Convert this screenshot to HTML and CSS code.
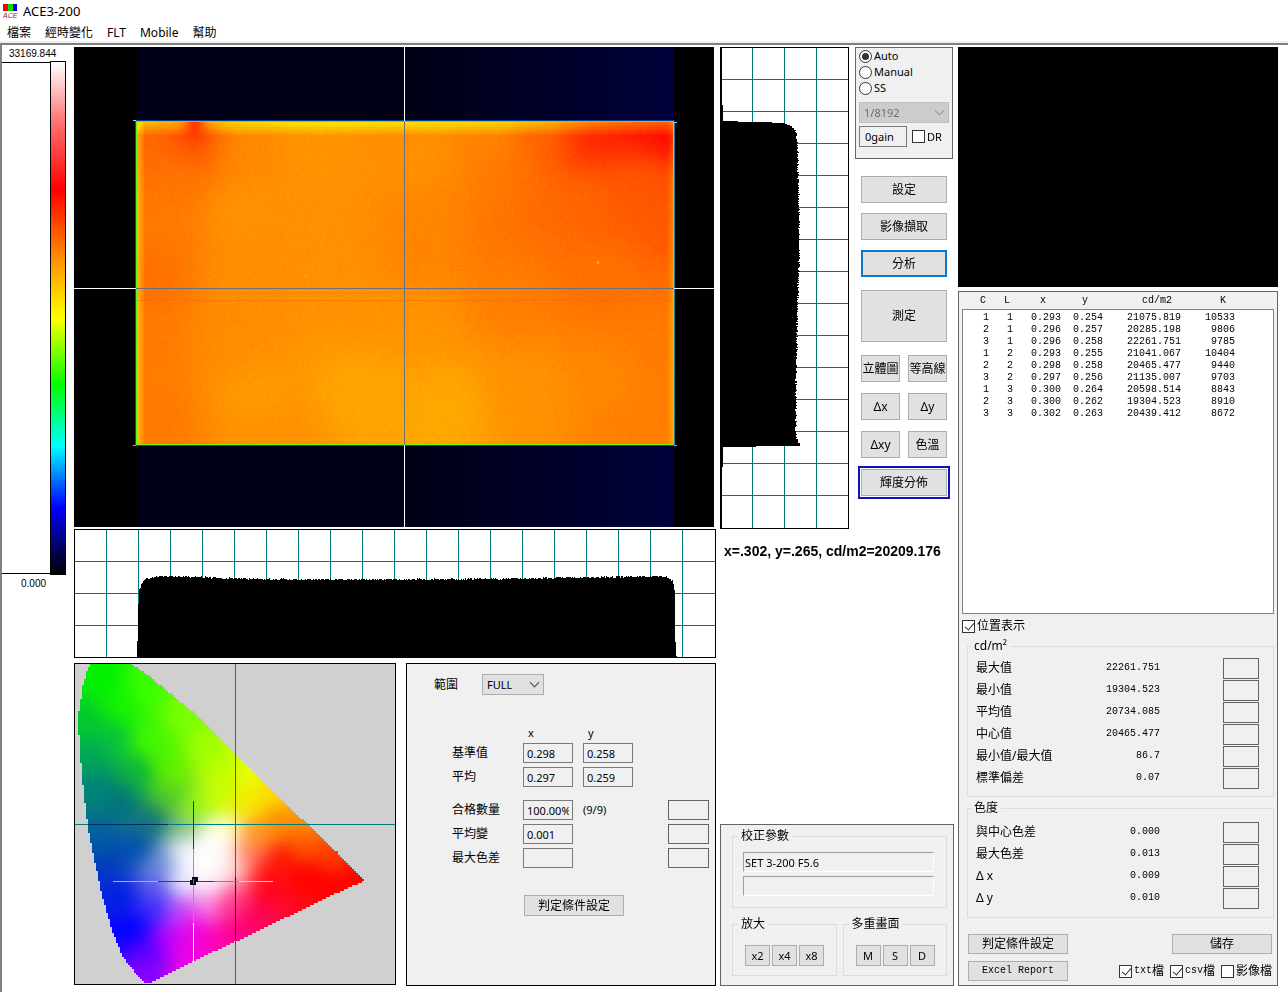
FILE: index.html
```html
<!DOCTYPE html>
<html lang="zh-Hant">
<head>
  <meta charset="utf-8">
  <title>ACE3-200</title>
  <link rel="stylesheet" href="styles.css">
</head>
<body>
  <header>
    <div class="titlebar">
      <svg class="logo" width="15" height="15" viewBox="0 0 15 15">
        <rect x="0" y="0" width="5" height="7" fill="#ff0000"/>
        <rect x="5" y="0" width="5" height="7" fill="#00e000"/>
        <rect x="10" y="0" width="4" height="7" fill="#0000d8"/>
        <text x="0" y="14" font-family="Liberation Sans" font-size="7" font-style="italic" fill="#a01828">ACE</text>
      </svg>
      <span>ACE3-200</span>
    </div>
    <nav class="menu">
      <a href="#">檔案</a>
      <a href="#">經時變化</a>
      <a href="#">FLT</a>
      <a href="#">Mobile</a>
      <a href="#">幫助</a>
    </nav>
  </header>

  <main class="workspace">
    <div class="scale">
      <div class="scale-label">33169.844</div>
      <div class="scale-body">
        <div class="scale-range"></div>
        <div class="scale-bar"></div>
      </div>
      <div class="scale-label low">0.000</div>
    </div>

    <div class="images">
      <div class="heatmap"><canvas id="heatmap" width="640" height="480"></canvas></div>
      <canvas id="profileX" width="642" height="129"></canvas>
      <div class="images-bottom">
        <canvas id="gamut" width="322" height="322"></canvas>
        <section class="judge">
          <div class="range">
            <label for="range">範圍</label>
            <span class="select"><select id="range"><option>FULL</option></select></span>
          </div>
          <div class="judge-grid">
            <span></span><span class="head">x</span><span class="head">y</span><span></span><span></span>
            <label for="baseX">基準值</label>
            <input type="text" id="baseX" value="0.298">
            <input type="text" aria-label="基準值 y" value="0.258">
            <span></span><span></span>
            <label for="avgX">平均</label>
            <input type="text" id="avgX" value="0.297">
            <input type="text" aria-label="平均 y" value="0.259">
            <span></span><span></span>
          </div>
          <div class="judge-grid results">
            <label for="passed">合格數量</label>
            <input type="text" id="passed" value="100.00%">
            <span class="count">(9/9)</span><span></span><span class="mark"></span>
            <label for="avgDiff">平均變</label>
            <input type="text" id="avgDiff" value="0.001">
            <span></span><span></span><span class="mark"></span>
            <label for="maxDiff">最大色差</label>
            <input type="text" id="maxDiff" value="">
            <span></span><span></span><span class="mark"></span>
          </div>
          <button class="judge-button">判定條件設定</button>
        </section>
      </div>
    </div>

    <div class="middle">
      <div class="middle-top">
        <canvas id="profileY" width="129" height="482"></canvas>
        <div class="controls">
          <div class="exposure">
            <label class="option"><input type="radio" name="mode" checked>Auto</label>
            <label class="option"><input type="radio" name="mode">Manual</label>
            <label class="option"><input type="radio" name="mode">SS</label>
            <span class="select"><select aria-label="shutter" disabled><option>1/8192</option></select></span>
            <div class="gain">
              <input type="text" aria-label="gain" value="0gain">
              <label><input type="checkbox">DR</label>
            </div>
          </div>
          <div class="actions">
            <button>設定</button>
            <button>影像擷取</button>
            <button class="active">分析</button>
          </div>
          <button class="measure">測定</button>
          <div class="views">
            <button>立體圖</button>
            <button>等高線</button>
            <button>Δx</button>
            <button>Δy</button>
            <button>Δxy</button>
            <button>色溫</button>
            <button class="selected">輝度分佈</button>
          </div>
        </div>
      </div>
      <p class="readout">x=.302, y=.265, cd/m2=20209.176</p>
      <section class="panel correction">
        <fieldset>
          <legend>校正參數</legend>
          <input type="text" class="sunken" aria-label="校正參數 1" value="SET 3-200 F5.6">
          <input type="text" class="sunken" aria-label="校正參數 2" value="">
        </fieldset>
        <div class="pair">
          <fieldset>
            <legend>放大</legend>
            <div class="keys">
              <button>x2</button>
              <button>x4</button>
              <button>x8</button>
            </div>
          </fieldset>
          <fieldset>
            <legend>多重畫面</legend>
            <div class="keys">
              <button>M</button>
              <button>S</button>
              <button>D</button>
            </div>
          </fieldset>
        </div>
      </section>
    </div>

    <div class="right">
      <div class="camera"></div>
      <section class="panel data">
        <table>
          <thead>
            <tr><th>C</th><th>L</th><th>x</th><th>y</th><th>cd/m2</th><th>K</th></tr>
          </thead>
          <tbody>
            <tr><td>1</td><td>1</td><td>0.293</td><td>0.254</td><td>21075.819</td><td>10533</td></tr>
            <tr><td>2</td><td>1</td><td>0.296</td><td>0.257</td><td>20285.198</td><td>9806</td></tr>
            <tr><td>3</td><td>1</td><td>0.296</td><td>0.258</td><td>22261.751</td><td>9785</td></tr>
            <tr><td>1</td><td>2</td><td>0.293</td><td>0.255</td><td>21041.067</td><td>10404</td></tr>
            <tr><td>2</td><td>2</td><td>0.298</td><td>0.258</td><td>20465.477</td><td>9440</td></tr>
            <tr><td>3</td><td>2</td><td>0.297</td><td>0.256</td><td>21135.007</td><td>9703</td></tr>
            <tr><td>1</td><td>3</td><td>0.300</td><td>0.264</td><td>20598.514</td><td>8843</td></tr>
            <tr><td>2</td><td>3</td><td>0.300</td><td>0.262</td><td>19304.523</td><td>8910</td></tr>
            <tr><td>3</td><td>3</td><td>0.302</td><td>0.263</td><td>20439.412</td><td>8672</td></tr>
          </tbody>
        </table>
        <label class="position"><input type="checkbox" checked>位置表示</label>
        <fieldset class="stats">
          <legend>cd/m²</legend>
          <div class="stat"><span>最大值</span><output>22261.751</output><span class="mark"></span></div>
          <div class="stat"><span>最小值</span><output>19304.523</output><span class="mark"></span></div>
          <div class="stat"><span>平均值</span><output>20734.085</output><span class="mark"></span></div>
          <div class="stat"><span>中心值</span><output>20465.477</output><span class="mark"></span></div>
          <div class="stat"><span>最小值/最大值</span><output>86.7</output><span class="mark"></span></div>
          <div class="stat"><span>標準偏差</span><output>0.07</output><span class="mark"></span></div>
        </fieldset>
        <fieldset class="stats chroma">
          <legend>色度</legend>
          <div class="stat"><span>與中心色差</span><output>0.000</output><span class="mark"></span></div>
          <div class="stat"><span>最大色差</span><output>0.013</output><span class="mark"></span></div>
          <div class="stat"><span>Δ x</span><output>0.009</output><span class="mark"></span></div>
          <div class="stat"><span>Δ y</span><output>0.010</output><span class="mark"></span></div>
        </fieldset>
        <div class="footer">
          <button>判定條件設定</button>
          <button>儲存</button>
        </div>
        <div class="footer">
          <button class="mono">Excel Report</button>
          <div class="exports">
            <label><input type="checkbox" checked><span class="mono">txt</span>檔</label>
            <label><input type="checkbox" checked><span class="mono">csv</span>檔</label>
            <label><input type="checkbox">影像檔</label>
          </div>
        </div>
      </section>
    </div>
  </main>

  <script src="script.js"></script>
</body>
</html>
```

FILE: styles.css
```css
* {
  box-sizing: border-box;
}

body {
  margin: 0;
  background-color: #fff;
  color: #000;
  font-family: "Noto Sans", "Noto Sans CJK TC", sans-serif;
  font-size: 12px;
  line-height: 16px;
}

button, input, select {
  margin: 0;
  font-family: inherit;
  font-size: 12px;
  color: #000;
}

canvas {
  display: block;
}

.mono {
  font-family: "Liberation Mono", "Noto Sans CJK TC", monospace;
  font-size: 10px;
}

/* title and menu */

.titlebar {
  display: flex;
  align-items: center;
  gap: 5px;
  height: 22px;
  padding-left: 3px;
  font-size: 13px;
}

.menu {
  display: flex;
  gap: 14px;
  height: 21px;
  padding-left: 7px;
  line-height: 21px;
  border-bottom: 2px solid #f0f0f0;
}

.menu a {
  color: #000;
  text-decoration: none;
}

.workspace {
  display: grid;
  grid-template-columns: 68px minmax(0, 1fr) 234px 320px;
  gap: 4px;
  padding: 2px 10px 6px 0;
  border-top: 2px solid #808080;
  border-left: 2px solid #808080;
}

/* colour scale */

.scale-label {
  height: 14px;
  padding-left: 7px;
  font-family: "Liberation Sans", sans-serif;
  font-size: 10px;
  line-height: 14px;
}

.scale-label.low {
  padding-left: 19px;
  margin-top: 2px;
}

.scale-body {
  display: flex;
  height: 514px;
}

.scale-range {
  width: 48px;
  margin: 1px 0;
  border-top: 1px solid #000;
  border-bottom: 1px solid #000;
}

.scale-bar {
  width: 16px;
  border: 1px solid #000;
  background: linear-gradient(#fff, #ff7070 12%, #f00 25%, #ff8000 37%, #ff0 50%, #0f0 63%, #0ff 75%, #00f 87%, #000);
}

/* images */

.heatmap {
  padding-right: 2px;
}

#heatmap {
  width: 100%;
  height: 480px;
}

#profileX {
  width: 100%;
  height: 129px;
  margin: 2px 0 5px;
}

.images-bottom {
  display: flex;
  align-items: flex-start;
  gap: 10px;
}

.judge {
  flex: 1;
  padding: 10px 6px 69px 27px;
  border: 1px solid #000;
  background-color: #f0f0f0;
}

.range {
  display: flex;
  align-items: center;
  gap: 24px;
  margin-bottom: 32px;
}

.range .select {
  width: 62px;
}

.judge-grid {
  display: grid;
  grid-template-columns: 61px 50px 50px 1fr 41px;
  gap: 4px 10px;
  align-items: center;
  padding-left: 18px;
}

.judge-grid.results {
  margin-top: 13px;
}

.judge-grid label {
  white-space: nowrap;
}

.judge-grid input {
  width: 50px;
  height: 20px;
  padding: 0 3px;
  border: 1px solid #7a7a7a;
  background-color: #f0f0f0;
  font-size: 11px;
}

.head {
  padding-left: 5px;
  font-size: 11px;
  line-height: 12px;
}

.count {
  font-size: 11px;
}

.mark {
  height: 20px;
  border: 1px solid #646464;
}

.judge-button {
  display: block;
  width: 100px;
  height: 21px;
  margin: 27px 0 0 90px;
}

/* buttons and form controls */

button {
  padding: 0;
  border: 1px solid #adadad;
  border-radius: 0;
  background-color: #e1e1e1;
  line-height: 16px;
  white-space: nowrap;
}

button.active {
  border: 2px solid #1078c8;
}

button.selected {
  outline: 2px solid #1010c0;
  outline-offset: 1px;
}

.select {
  position: relative;
  display: block;
}

.select select {
  display: block;
  width: 100%;
  height: 21px;
  padding: 0 4px;
  border: 1px solid #adadad;
  border-radius: 0;
  background-color: #e1e1e1;
  font-size: 11px;
  appearance: none;
}

.select select:disabled {
  border-color: #bfbfbf;
  background-color: #ccc;
  color: #6d6d6d;
  opacity: 1;
}

.select::after {
  content: "";
  position: absolute;
  top: 5px;
  right: 6px;
  width: 6px;
  height: 6px;
  border-right: 1px solid #444;
  border-bottom: 1px solid #444;
  transform: rotate(45deg);
}

.exposure .select::after {
  border-color: #999;
}

input[type="checkbox"],
input[type="radio"] {
  position: relative;
  flex: none;
  width: 13px;
  height: 13px;
  border: 1px solid #333;
  background-color: #fff;
  appearance: none;
}

input[type="radio"] {
  border-radius: 50%;
}

input[type="radio"]:checked::after {
  content: "";
  position: absolute;
  top: 2px;
  left: 2px;
  width: 7px;
  height: 7px;
  border-radius: 50%;
  background-color: #333;
}

input[type="checkbox"]:checked::after {
  content: "";
  position: absolute;
  top: 0;
  left: 4px;
  width: 4px;
  height: 8px;
  border-right: 1px solid #333;
  border-bottom: 1px solid #333;
  transform: rotate(40deg);
}

/* middle column */

.middle {
  display: flex;
  flex-direction: column;
}

.middle-top {
  display: flex;
  gap: 6px;
}

.controls {
  display: flex;
  flex-direction: column;
  gap: 13px;
  width: 98px;
}

.exposure {
  height: 112px;
  padding: 0 3px;
  border: 1px solid #646464;
  background-color: #f0f0f0;
  font-size: 11px;
}

.option {
  display: flex;
  align-items: center;
  gap: 2px;
  height: 16px;
}

.exposure .select {
  margin: 6px 0 3px;
}

.gain {
  display: flex;
  gap: 5px;
}

.gain label {
  display: flex;
  align-items: center;
  gap: 2px;
}

.gain input[type="text"] {
  width: 48px;
  height: 21px;
  padding: 0 5px;
  border: 1px solid #7a7a7a;
  background-color: #f0f0f0;
  font-size: 11px;
}

.actions {
  display: flex;
  flex-direction: column;
  gap: 10px;
  margin: 4px 6px 0;
}

.actions button,
.views button {
  height: 27px;
}

.measure {
  height: 52px;
  margin: 0 6px;
}

.views {
  display: grid;
  grid-template-columns: 1fr 1fr;
  gap: 11px 8px;
  margin: 0 6px;
}

.views .selected {
  grid-column: span 2;
}

.readout {
  margin: 12px 0 0;
  padding-left: 4px;
  font-family: "Liberation Sans", sans-serif;
  font-size: 14px;
  font-weight: bold;
  line-height: 20px;
  white-space: nowrap;
}

.panel {
  border: 1px solid #646464;
  background-color: #f0f0f0;
}

fieldset {
  min-width: 0;
  margin: 0;
  border: 1px solid #dcdcdc;
}

legend {
  margin-left: -5px;
  padding: 0 3px;
  line-height: 16px;
}

.correction {
  margin-top: auto;
  padding: 3px 6px 9px 11px;
}

.correction fieldset {
  padding: 8px 12px 11px 10px;
}

.sunken {
  display: block;
  width: 100%;
  height: 20px;
  padding: 0 1px;
  border: 1px solid;
  border-color: #a0a0a0 #fff #fff #a0a0a0;
  background-color: #f0f0f0;
  font-size: 11px;
}

.sunken + .sunken {
  margin-top: 4px;
}

.pair {
  display: flex;
  gap: 6px;
  margin-top: 8px;
}

.pair fieldset {
  flex: 1;
  padding: 13px 10px 9px;
}

.keys {
  display: flex;
  gap: 2px;
  padding-left: 2px;
}

.keys button {
  width: 25px;
  height: 21px;
  font-size: 11px;
}

/* right column */

.right {
  display: flex;
  flex-direction: column;
  gap: 4px;
}

.camera {
  height: 240px;
  background-color: #000;
}

.data {
  flex: 1;
  display: flex;
  flex-direction: column;
  padding: 0 3px 4px;
}

table {
  flex: 1;
  display: flex;
  flex-direction: column;
  font-family: "Liberation Mono", monospace;
  font-size: 10px;
  line-height: 12px;
}

thead {
  display: block;
  height: 17px;
  padding: 3px 1px 0;
}

tbody {
  flex: 1;
  display: block;
  padding-top: 2px;
  border: 1px solid #828282;
  background-color: #fff;
}

tr {
  display: grid;
  grid-template-columns: 26px 24px 48px 42px 78px 54px;
}

th, td {
  padding: 0;
  font-weight: normal;
  text-align: right;
}

th {
  padding-right: 3px;
}

th:nth-child(3), th:nth-child(4) {
  padding-right: 15px;
}

th:nth-child(5), th:nth-child(6) {
  padding-right: 9px;
}

.position {
  display: flex;
  align-items: center;
  gap: 2px;
  height: 16px;
  margin: 4px 0;
}

.stats {
  margin-left: 5px;
  padding: 3px 14px 7px 8px;
}

.chroma {
  margin-top: 3px;
  padding: 5px 14px 8px 8px;
}

.stat {
  display: flex;
  align-items: center;
  height: 22px;
}

.stat span:first-child {
  flex: 1;
}

.stat output {
  margin-right: 63px;
  font-family: "Liberation Mono", monospace;
  font-size: 10px;
}

.stat .mark {
  width: 36px;
  height: 21px;
}

.footer {
  display: flex;
  align-items: center;
  justify-content: space-between;
  height: 20px;
  margin: 7px 2px 0 6px;
}

.chroma + .footer {
  margin-top: 16px;
}

.footer button {
  width: 100px;
  height: 20px;
}

.exports {
  display: flex;
  gap: 6px;
}

.exports label {
  display: flex;
  align-items: center;
}

.exports input {
  margin-right: 2px;
}
```

FILE: script.js
```js
// small repeatable random generator so the plots look the same every time
var seed = 7;
function rand() {
  seed = (seed * 16807) % 2147483647;
  return seed / 2147483647;
}

// colour at x, y weighted by the distance to points: [x, y, r, g, b]
function blend(points, x, y, size) {
  var r = 0, g = 0, b = 0, total = 0;
  for (var i = 0; i < points.length; i++) {
    var p = points[i];
    var dx = x - p[0], dy = y - p[1];
    var d = dx * dx + dy * dy + size * size;
    var w = 1 / (d * d);
    r += p[2] * w;
    g += p[3] * w;
    b += p[4] * w;
    total += w;
  }
  return [r / total, g / total, b / total];
}

// blended colours on a coarse grid, averaged over the cells around each one
function smoothField(points, w, h, step, size, radius) {
  var cols = Math.ceil(w / step), rows = Math.ceil(h / step);
  var field = [];
  for (var j = 0; j < rows; j++) {
    for (var i = 0; i < cols; i++) field.push(blend(points, i * step, j * step, size));
  }

  function pass(src, di, dj) {
    return src.map(function (c, n) {
      var i = n % cols, j = Math.floor(n / cols);
      var sum = [0, 0, 0], count = 0;
      for (var k = -radius; k <= radius; k++) {
        var ii = i + k * di, jj = j + k * dj;
        if (ii < 0 || jj < 0 || ii >= cols || jj >= rows) continue;
        var s = src[jj * cols + ii];
        sum[0] += s[0];
        sum[1] += s[1];
        sum[2] += s[2];
        count++;
      }
      return [sum[0] / count, sum[1] / count, sum[2] / count];
    });
  }

  for (var n = 0; n < 2; n++) field = pass(pass(field, 1, 0), 0, 1);
  return function (x, y) {
    return field[Math.floor(y / step) * cols + Math.floor(x / step)];
  };
}

function line(ctx, color, x, y, w, h) {
  ctx.fillStyle = color;
  ctx.fillRect(x, y, w, h);
}

function drawHeatmap() {
  var ctx = document.getElementById('heatmap').getContext('2d');
  // x, y, green level
  var levels = [
    [79, 93, 104], [120, 85, 66], [100, 126, 116], [79, 226, 112], [79, 176, 122],
    [79, 376, 122], [79, 293, 124], [162, 93, 138], [162, 160, 146], [162, 226, 142],
    [162, 293, 140], [183, 343, 154], [203, 386, 144], [245, 90, 148], [245, 126, 146], [245, 193, 144],
    [286, 260, 146], [286, 343, 166], [348, 90, 140], [348, 110, 146], [369, 160, 132], [348, 210, 132],
    [348, 276, 148], [369, 360, 168], [411, 90, 132], [431, 126, 120], [431, 176, 116],
    [431, 243, 126], [452, 343, 146], [473, 93, 98], [514, 94, 40], [556, 86, 22], [593, 90, 4],
    [514, 143, 100], [560, 125, 88], [576, 170, 90], [535, 226, 112], [576, 293, 122], [535, 326, 134],
    [576, 376, 126], [470, 160, 106], [590, 135, 84]
  ];
  var points = levels.map(function (p) { return [p[0], p[1], 255, p[2], 0]; });
  var field = smoothField(points, 640, 480, 2, 16, 6);

  line(ctx, '#000', 0, 0, 640, 480);
  var navy = ctx.createLinearGradient(63, 0, 600, 0);
  navy.addColorStop(0, '#000016');
  navy.addColorStop(0.5, '#000016');
  navy.addColorStop(1, '#00003a');
  line(ctx, navy, 63, 0, 537, 480);

  for (var y = 74; y < 398; y += 2) {
    for (var x = 62; x < 600; x += 2) {
      var g = field(x, y)[1] + (rand() - 0.5) * 8;
      // bright strip at the top, broken by the dark spot on the left
      var spot = Math.exp(-Math.pow((x - 120) / 10, 2));
      g += Math.max(0, 88 - y) * 6 * (1 - 0.9 * spot) - spot * Math.max(0, 100 - y);
      if (x < 70) g += (70 - x) * 9;
      if (x > 592) g += (x - 592) * 6;
      line(ctx, 'rgb(255,' + Math.round(Math.min(g, 225)) + ',0)', x, y, 2, 2);
    }
  }
  // lit edge of the display
  line(ctx, '#0040a0', 61, 73, 540, 1);
  line(ctx, '#60e020', 62, 74, 538, 1);
  line(ctx, '#0050a0', 61, 74, 1, 325);
  line(ctx, '#60f020', 62, 74, 1, 324);
  line(ctx, '#90e020', 599, 75, 1, 323);
  line(ctx, '#2080a0', 600, 75, 1, 323);
  line(ctx, '#80f000', 62, 397, 538, 1);
  line(ctx, '#0050a0', 61, 398, 540, 1);
  line(ctx, '#80e0ff', 59, 73, 3, 1);
  line(ctx, '#80e0ff', 600, 75, 3, 1);
  line(ctx, '#40c0ff', 59, 398, 3, 1);
  line(ctx, '#40c0ff', 600, 398, 3, 1);
  line(ctx, 'rgba(240,90,0,0.3)', 63, 253, 536, 1);
  line(ctx, '#ffc020', 231, 228, 1, 3);
  line(ctx, '#ffb020', 523, 214, 2, 3);
  // crosshair
  line(ctx, '#fff', 330, 0, 1, 480);
  line(ctx, '#fff', 0, 241, 640, 1);
  line(ctx, '#6a7080', 330, 74, 1, 324);
  line(ctx, '#6a7080', 62, 241, 538, 1);
}

function drawGrid(ctx, w, h) {
  line(ctx, '#fff', 0, 0, w, h);
  for (var x = 32; x < w - 2; x += 32) line(ctx, '#007878', x, 0, 1, h);
  for (var y = 32; y < h - 2; y += 32) line(ctx, '#007878', 0, y, w, 1);
}

function drawBorder(ctx, w, h) {
  ctx.strokeStyle = '#000';
  ctx.strokeRect(0.5, 0.5, w - 1, h - 1);
}

// value at t on a line through [t, value] points
function lookup(curve, t) {
  for (var i = 1; i < curve.length; i++) {
    if (t <= curve[i][0]) {
      var a = curve[i - 1], b = curve[i];
      return a[1] + (b[1] - a[1]) * (t - a[0]) / (b[0] - a[0]);
    }
  }
  return curve[curve.length - 1][1];
}

function drawProfileX() {
  var ctx = document.getElementById('profileX').getContext('2d');
  var curve = [[62, 127], [63, 112], [64, 75], [65, 60], [68, 53], [72, 49], [85, 47], [110, 47], [160, 49],
    [220, 50], [330, 50], [450, 49], [560, 47], [592, 47], [598, 51], [600, 60], [601, 112], [602, 126]];
  drawGrid(ctx, 642, 129);
  for (var x = 62; x < 603; x++) {
    var top = Math.round(lookup(curve, x) + rand() * 2 - 0.5);
    line(ctx, '#000', x, top, 1, 129 - top);
  }
  drawBorder(ctx, 642, 129);
}

function drawProfileY() {
  var ctx = document.getElementById('profileY').getContext('2d');
  var curve = [[74, 18], [75, 52], [76, 64], [78, 70], [83, 75], [95, 77], [140, 78], [200, 79], [260, 77],
    [320, 76], [380, 75], [390, 76], [397, 79]];
  drawGrid(ctx, 129, 482);
  line(ctx, '#000', 0, 58, 3, 362);
  for (var y = 74; y < 399; y++) {
    line(ctx, '#000', 0, y, Math.round(lookup(curve, y) + rand() * 2 - 0.5), 1);
  }
  line(ctx, '#000', 0, 399, 36, 1);
  line(ctx, '#000', 0, 0, 2, 482);
  drawBorder(ctx, 129, 482);
}

function drawGamut() {
  var ctx = document.getElementById('gamut').getContext('2d');
  var outline = [[17, 0], [56, 0], [74, 12], [119, 49], [161, 90], [196, 125], [229, 157], [263, 189],
    [290, 218], [263, 230], [213, 254], [163, 278], [119, 298], [75, 320], [70, 319], [61, 309], [49, 294],
    [38, 267], [28, 232], [21, 199], [14, 165], [10, 132], [7, 99], [5, 72], [5, 49], [9, 22], [13, 9]];
  var points = [
    [26, 12, 0, 240, 0], [11, 59, 0, 200, 50], [16, 92, 0, 165, 90], [23, 125, 0, 130, 120],
    [46, 139, 0, 115, 125], [79, 159, 15, 115, 120], [26, 179, 0, 90, 165], [33, 199, 0, 60, 190],
    [63, 185, 0, 80, 175], [46, 232, 0, 30, 230], [59, 265, 0, 0, 255], [79, 245, 60, 40, 255],
    [73, 285, 90, 0, 255], [71, 317, 140, 0, 255], [96, 275, 190, 0, 255], [113, 285, 240, 0, 230],
    [119, 262, 240, 0, 230], [139, 275, 255, 0, 180], [163, 265, 255, 0, 130], [183, 249, 255, 0, 80],
    [156, 239, 255, 60, 140], [196, 225, 255, 0, 30], [229, 212, 255, 0, 0], [283, 217, 255, 0, 0],
    [250, 222, 255, 0, 0], [256, 189, 255, 60, 0], [229, 179, 255, 90, 0], [203, 159, 255, 140, 0],
    [229, 155, 255, 150, 0], [196, 129, 255, 220, 0], [173, 139, 245, 235, 0], [176, 109, 235, 255, 0],
    [146, 109, 190, 255, 0], [146, 135, 205, 255, 0], [129, 85, 160, 255, 0], [109, 52, 120, 255, 0],
    [73, 25, 60, 255, 0], [46, 42, 20, 245, 0], [73, 75, 60, 250, 0], [96, 109, 100, 240, 0],
    [90, 90, 80, 245, 0], [63, 109, 10, 180, 60], [39, 75, 5, 195, 60], [96, 135, 80, 200, 40],
    [119, 145, 150, 245, 20], [109, 163, 130, 190, 140], [149, 168, 255, 255, 220],
    [139, 185, 255, 255, 255], [129, 199, 255, 255, 255], [135, 178, 255, 255, 255],
    [120, 190, 255, 255, 255], [140, 200, 255, 255, 255], [125, 208, 255, 255, 255],
    [109, 189, 235, 240, 250], [85, 199, 110, 140, 215],
    [106, 218, 235, 230, 255], [83, 225, 90, 90, 240], [136, 220, 255, 230, 250],
    [156, 199, 255, 225, 225], [176, 192, 255, 120, 100], [183, 172, 255, 150, 40],
    [193, 209, 255, 20, 20], [129, 245, 250, 120, 230], [106, 249, 190, 70, 255], [205, 195, 255, 20, 0],
    // beyond the outline, to keep the rim saturated
    [-15, 60, 0, 210, 40], [-10, 120, 0, 140, 110], [0, 170, 0, 100, 150], [8, 220, 0, 40, 210],
    [25, 275, 0, 0, 255], [80, -15, 60, 255, 0], [125, 30, 130, 255, 0], [175, 75, 200, 255, 0],
    [220, 120, 255, 220, 0], [255, 155, 255, 130, 0], [310, 217, 255, 0, 0], [225, 270, 255, 0, 40],
    [165, 300, 255, 0, 140], [120, 320, 240, 0, 230], [20, -15, 0, 250, 0]
  ];
  line(ctx, '#d0d0d0', 0, 0, 322, 322);

  var field = smoothField(points, 322, 322, 2, 5, 4);
  var shape = new Path2D();
  outline.forEach(function (p) { shape.lineTo(p[0], p[1]); });
  shape.closePath();
  for (var y = 0; y < 322; y += 2) {
    for (var x = 0; x < 322; x += 2) {
      if (!ctx.isPointInPath(shape, x + 1, y + 1)) continue;
      line(ctx, 'rgb(' + field(x, y).map(Math.round).join(',') + ')', x, y, 2, 2);
    }
  }

  // axes
  line(ctx, '#007c7c', 161, 0, 1, 322);
  line(ctx, '#007c7c', 0, 161, 322, 1);
  line(ctx, '#002c60', 14, 161, 80, 1);
  line(ctx, '#500030', 161, 214, 1, 62);
  // measured point
  line(ctx, '#701040', 119, 138, 1, 48);
  line(ctx, '#d070d0', 119, 186, 1, 74);
  line(ctx, '#fff', 119, 260, 1, 39);
  line(ctx, '#60d8b0', 39, 218, 45, 1);
  line(ctx, '#901838', 84, 218, 56, 1);
  line(ctx, '#e06060', 140, 218, 25, 1);
  line(ctx, '#ffc0b0', 165, 218, 34, 1);
  line(ctx, '#000820', 116, 217, 6, 5);
  line(ctx, '#000820', 118, 214, 6, 5);
  line(ctx, '#20a060', 119, 216, 1, 5);
  drawBorder(ctx, 322, 322);
}

drawHeatmap();
drawProfileX();
drawProfileY();
drawGamut();
```
